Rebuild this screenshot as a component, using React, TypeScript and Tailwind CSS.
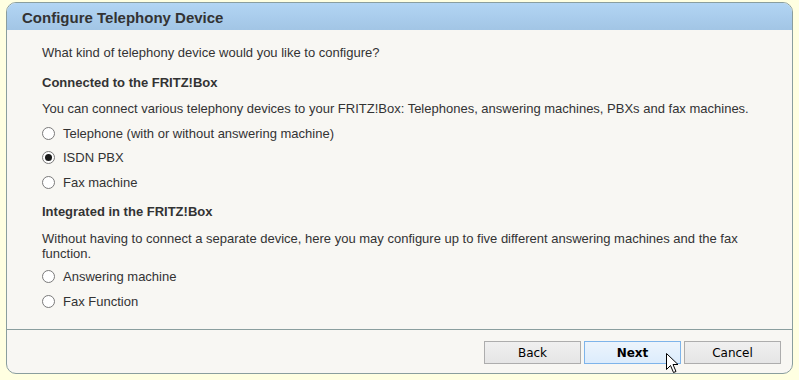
import { useState } from "react";

const Radio = ({ checked, label, className }: { checked?: boolean; label: string; className: string }) => (
  <label className={`flex items-center h-[15px] ${className}`}>
    <span className="relative w-[13px] h-[13px] rounded-full border border-[#7a7a7a] bg-white flex items-center justify-center">
      {checked && <span className="w-[7px] h-[7px] rounded-full bg-[#1a1a1a]" />}
    </span>
    <span className="ml-[8px]">{label}</span>
  </label>
);

const Cursor = () => (
  <svg
    className="absolute left-[666px] top-[353px]"
    width="13"
    height="21"
    viewBox="0 0 13 21"
  >
    <path
      d="M0.5 0.5 L0.5 16.5 L4.5 12.5 L7.5 19.5 L10 18.5 L7 11.5 L12 11.5 Z"
      fill="white"
      stroke="black"
      strokeWidth="1"
      strokeLinejoin="miter"
    />
  </svg>
);

export default function App() {
  const [device] = useState("isdn");

  return (
    <div className="relative w-[799px] h-[380px] bg-[#ffffe1] pl-[6px] pt-[2px] pr-[6px] pb-[6px] font-['Liberation_Sans',Arial,sans-serif] text-[13px] text-[#333333]">
      <div className="h-full flex flex-col border border-[#8a9e9e] rounded-[10px] overflow-hidden bg-[#f8f7f3]">
        <div className="h-[27px] shrink-0 bg-gradient-to-b from-[#b2d5f4] to-[#a2c5e5] pl-[15px] flex items-center">
          <span className="text-[15px] font-bold text-[#333333] leading-none pt-[1px]">
            Configure Telephony Device
          </span>
        </div>

        <div className="flex-1 flex flex-col pl-[35px] leading-[15px]">
          <p className="mt-[15px] h-[15px]">What kind of telephony device would you like to configure?</p>
          <p className="mt-[15px] h-[15px] font-bold">Connected to the FRITZ!Box</p>
          <p className="mt-[11px] h-[15px]">
            You can connect various telephony devices to your FRITZ!Box: Telephones, answering machines, PBXs and fax machines.
          </p>
          <Radio className="mt-[10px]" checked={device === "phone"} label="Telephone (with or without answering machine)" />
          <Radio className="mt-[9px]" checked={device === "isdn"} label="ISDN PBX" />
          <Radio className="mt-[10px]" checked={device === "fax"} label="Fax machine" />
          <p className="mt-[14px] h-[15px] font-bold">Integrated in the FRITZ!Box</p>
          <p className="mt-[12px] pr-[40px]">
            Without having to connect a separate device, here you may configure up to five different answering machines and the fax function.
          </p>
          <Radio className="mt-[8px]" checked={device === "tam"} label="Answering machine" />
          <Radio className="mt-[10px]" checked={device === "faxfn"} label="Fax Function" />
        </div>

        <div className="h-[44px] shrink-0 border-t border-[#8a9e9e] flex justify-end items-start pt-[11px] pr-[11px] gap-[3px] font-['DejaVu_Sans',Tahoma,sans-serif] text-[12px] text-black">
          <button className="w-[97px] h-[23px] border border-[#adadad] bg-gradient-to-b from-[#f0f0f0] to-[#e5e5e5]">
            Back
          </button>
          <button className="w-[97px] h-[23px] border border-[#7eb4ea] bg-gradient-to-b from-[#ecf4fc] to-[#dcecfc] font-bold">
            Next
          </button>
          <button className="w-[97px] h-[23px] border border-[#adadad] bg-gradient-to-b from-[#f0f0f0] to-[#e5e5e5]">
            Cancel
          </button>
        </div>
      </div>
      <Cursor />
    </div>
  );
}
